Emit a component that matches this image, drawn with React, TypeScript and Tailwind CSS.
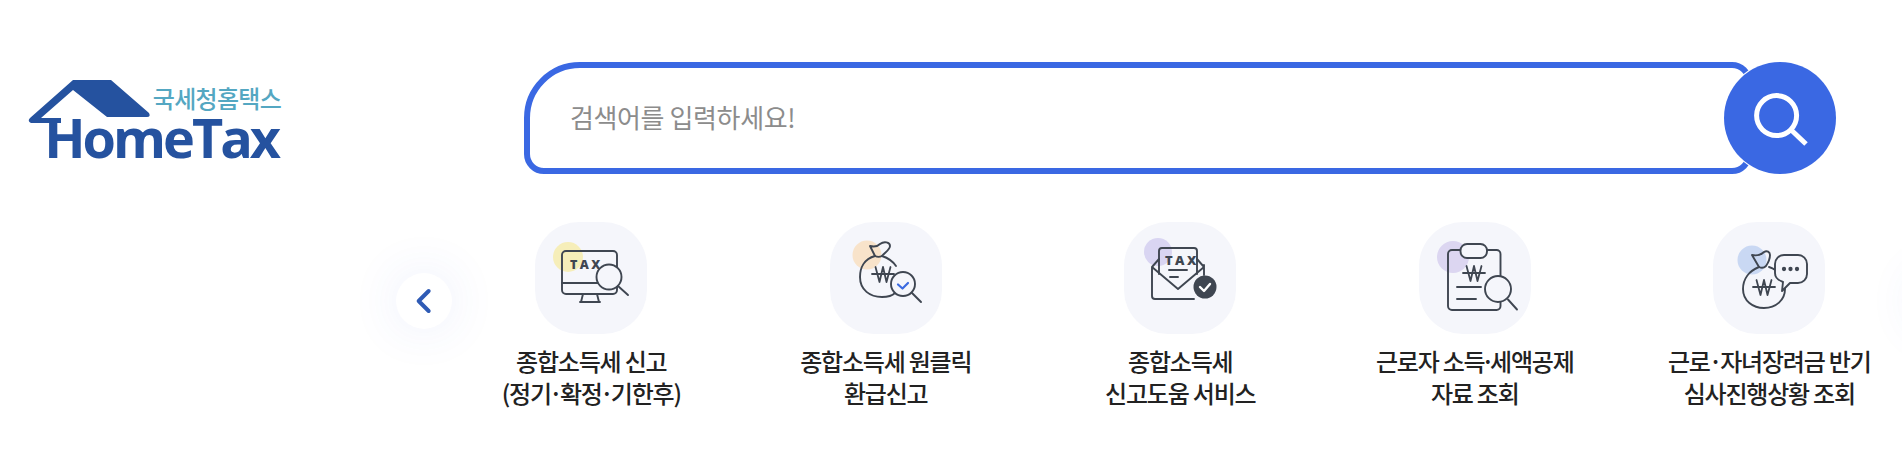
const ink = "#3f4651";

function Won({ x, y }: { x: number; y: number }) {
  return (
    <path
      d={`M${x - 11} ${y - 1}H${x + 11}M${x - 7.5} ${y - 8}L${x - 3.5} ${y + 7}L${x} ${y - 8}L${x + 3.5} ${y + 7}L${x + 7.5} ${y - 8}`}
      fill="none"
      stroke={ink}
      strokeWidth="1.8"
      strokeLinejoin="round"
    />
  );
}

function IconBase({ children }: { children: React.ReactNode }) {
  return (
    <svg viewBox="0 0 112 112" className="w-[112px] h-[112px]" fill="none" stroke={ink} strokeWidth="1.9" strokeLinecap="round" strokeLinejoin="round">
      {children}
    </svg>
  );
}

function TaxLabel({ x, y, size }: { x: number; y: number; size: number }) {
  return (
    <text x={x} y={y} fontFamily="'Open Sans', sans-serif" fontWeight="800" fontSize={size} letterSpacing="2.4" fill={ink} stroke="none">
      TAX
    </text>
  );
}

function MonitorIcon() {
  return (
    <IconBase>
      <circle cx="33" cy="35" r="15" fill="#f6eeb9" stroke="none" />
      <rect x="27" y="29" width="55" height="43" rx="4" />
      <path d="M27 61H82M48 72L46 80H64L62 72M45 80H65" />
      <TaxLabel x={35} y={47} size={12.5} />
      <circle cx="74" cy="55" r="12.5" fill="#f5f6fb" />
      <path d="M83 64L93 73" />
    </IconBase>
  );
}

function BagSearchIcon() {
  return (
    <IconBase>
      <circle cx="37" cy="33" r="14.5" fill="#f8e3ca" stroke="none" />
      <path d="M45 34C34 37 30 46 30 55C30 68 40 75 52 75C58 75 62 74 65 71" />
      <path d="M45 34L40 24C44 25 47 25 50 22C54 19 60 20 60 24C60 28 54 31 52 34C50 35 47 35 45 34Z" />
      <path d="M52 34C58 36 62 38 66 44" />
      <Won x={53} y={53} />
      <circle cx="73" cy="62" r="12" fill="#f5f6fb" />
      <path d="M82 71L91 80" />
      <path d="M68 62.5L72.5 66.5L78 61" stroke="#3b6ae0" strokeWidth="2.2" />
    </IconBase>
  );
}

function EnvelopeIcon() {
  return (
    <IconBase>
      <circle cx="34" cy="30" r="14" fill="#d9d5f2" stroke="none" />
      <path d="M35 52V29C35 27 36 26 38 26H70C72 26 73 27 73 29V52" />
      <path d="M35 37L28 45L54 67L80 45L73 37M28 45V74C28 76 29 77 31 77H70M80 43V53" />
      <TaxLabel x={41} y={43} size={13} />
      <path d="M45 48H63M46 55H54" />
      <circle cx="81" cy="65" r="11.5" fill={ink} stroke="none" />
      <path d="M76 65L80 69L86 62" stroke="#ffffff" strokeWidth="2.4" />
    </IconBase>
  );
}

function ClipboardIcon() {
  return (
    <IconBase>
      <circle cx="34" cy="35" r="16" fill="#dcd6f1" stroke="none" />
      <rect x="29" y="28" width="52.5" height="60" rx="4" />
      <rect x="41.5" y="22" width="26.5" height="14" rx="6.5" fill="#f5f6fb" />
      <Won x={55} y={52} />
      <path d="M38 65H62M38 77H57" />
      <circle cx="79" cy="67" r="13" fill="#f5f6fb" />
      <path d="M89 77.5L98 87.5" />
    </IconBase>
  );
}

function BagChatIcon() {
  return (
    <IconBase>
      <circle cx="39" cy="38" r="14.5" fill="#c9d8f3" stroke="none" />
      <path d="M46 45C36 49 30 57 30 67C30 79 40 86 51 86C63 86 72 78 72 67C72 57 66 48 56 45" />
      <path d="M46 45L39 33C44 34 48 33 51 30C54 28 57 30 57 33C57 37 55 41 53 44C51 46 48 46 46 45Z" />
      <Won x={51} y={66} />
      <path d="M71 33H85C90 33 94 37 94 42V52C94 57 90 61 85 61H77L69 69L70 60C65 58 62 56 62 51V42C62 37 66 33 71 33Z" fill="#f5f6fb" />
      <circle cx="71" cy="47" r="1.2" fill={ink} />
      <circle cx="77.5" cy="47" r="1.2" fill={ink} />
      <circle cx="84" cy="47" r="1.2" fill={ink} />
    </IconBase>
  );
}

const items = [
  {
    key: "a",
    icon: <MonitorIcon />,
    label: (
      <>
        종합소득세 신고
        <br />
        (정기<span className="mx-[-1.75px]">·</span>확정<span className="mx-[-1.75px]">·</span>기한후)
      </>
    ),
  },
  {
    key: "b",
    icon: <BagSearchIcon />,
    label: (
      <>
        종합소득세 원클릭
        <br />
        환급신고
      </>
    ),
  },
  {
    key: "c",
    icon: <EnvelopeIcon />,
    label: (
      <>
        종합소득세
        <br />
        신고도움 서비스
      </>
    ),
  },
  {
    key: "d",
    icon: <ClipboardIcon />,
    label: (
      <>
        근로자 소득<span className="mx-[-3.5px]">·</span>세액공제
        <br />
        자료 조회
      </>
    ),
  },
  {
    key: "e",
    icon: <BagChatIcon />,
    label: (
      <>
        근로<span className="mx-[-1px]">·</span>자녀장려금 반기
        <br />
        심사진행상황 조회
      </>
    ),
  },
];

export default function App() {
  return (
    <div className="relative w-full h-[454px] overflow-hidden bg-white font-['Noto_Sans_CJK_KR','Noto_Sans',sans-serif]">
      {/* header */}
      <div className="flex items-start pt-[62px]">
        <a className="relative ml-[51px] mt-[20px] flex w-[230px] flex-col items-end">
          <svg viewBox="0 0 130 50" className="absolute left-[-25px] top-[-2px] w-[130px] h-[50px]">
            <path
              d="M47 0H85L123 33Q125 37 121 37H81L47 10L15 38H35V43H5Q1 41 4 38Z"
              fill="#25529f"
            />
          </svg>
          <span className="relative text-[24px] leading-[32px] font-medium tracking-[-0.03em] whitespace-nowrap text-[#54a7c2]">국세청홈택스</span>
          <span className="relative mr-[3px] font-['Open_Sans',sans-serif] text-[54px] leading-[46px] font-bold tracking-[-3px] text-[#25529f]">HomeTax</span>
        </a>

        <div className="ml-[243px] flex">
          <input
            readOnly
            placeholder="검색어를 입력하세요!"
            className="h-[112px] w-[1228px] rounded-[56px_20px_20px_20px] border-[6px] border-[#3a68e3] pb-[4px] pl-[40px] text-[26px] tracking-[-0.015em] outline-none placeholder:text-[#8c8c8c]"
          />
          <button className="relative -ml-[28px] h-[112px] w-[112px] rounded-full bg-[#3a68e3] ring-1 ring-white">
            <svg viewBox="0 0 112 112" className="w-[112px] h-[112px]" fill="none" stroke="#ffffff" strokeWidth="5">
              <circle cx="52.6" cy="53.6" r="20" />
              <path d="M68 68.7L82 82" />
            </svg>
          </button>
        </div>
      </div>

      {/* quick menu */}
      <div className="relative mt-[48px] flex pl-[444px]">
        <button className="absolute left-[396px] top-[51px] z-10 flex h-[56px] w-[56px] items-center justify-center rounded-full bg-white shadow-[0_0_50px_rgba(60,90,220,0.1)]">
          <svg viewBox="0 0 24 24" className="w-[32px] h-[32px]" fill="none" stroke="#2f5bb5" strokeWidth="3" strokeLinecap="round" strokeLinejoin="round">
            <path d="M15.5 4.5L8 12L15.5 19.5" />
          </svg>
        </button>
        <button className="absolute left-[1913px] top-[51px] z-10 h-[56px] w-[56px] rounded-full bg-white shadow-[0_0_50px_rgba(60,90,220,0.1)]" />

        {items.map((item) => (
          <div key={item.key} className="flex w-[294.5px] shrink-0 flex-col items-center">
            <div className="h-[112px] w-[112px] rounded-[44px] bg-[#f5f6fb]">{item.icon}</div>
            <p className="mt-[11px] text-center text-[24px] leading-[32px] font-medium tracking-[-0.05em] whitespace-nowrap text-[#222222]">
              {item.label}
            </p>
          </div>
        ))}
      </div>
    </div>
  );
}
